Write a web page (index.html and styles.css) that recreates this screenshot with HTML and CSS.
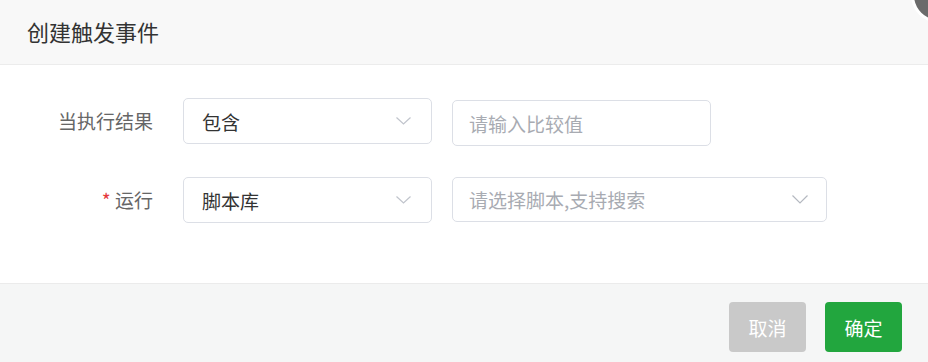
FILE: index.html
```html
<!DOCTYPE html>
<html lang="zh-CN">

<head>
    <meta charset="UTF-8">
    <title>创建触发事件</title>
    <link rel="stylesheet" href="styles.css">
</head>

<body>
    <div class="dialog">
        <div class="dialog-header">创建触发事件</div>
        <span class="dialog-close"></span>

        <div class="dialog-body">
            <div class="form-row">
                <label class="form-label">当执行结果</label>
                <div class="select select-short">
                    <span class="select-value">包含</span>
                    <svg class="chevron" width="15" height="8" viewBox="0 0 15 8"><path d="M0.5 0.5 L7.5 7 L14.5 0.5" fill="none" stroke="#c0c4cc" stroke-width="1.2"/></svg>
                </div>
                <div class="text-input">
                    <span class="placeholder">请输入比较值</span>
                </div>
            </div>

            <div class="form-row">
                <label class="form-label"><span class="required">*</span> 运行</label>
                <div class="select select-short">
                    <span class="select-value">脚本库</span>
                    <svg class="chevron" width="15" height="8" viewBox="0 0 15 8"><path d="M0.5 0.5 L7.5 7 L14.5 0.5" fill="none" stroke="#c0c4cc" stroke-width="1.2"/></svg>
                </div>
                <div class="select select-long">
                    <span class="placeholder">请选择脚本,支持搜索</span>
                    <svg class="chevron" width="16" height="9" viewBox="0 0 16 9"><path d="M0.5 0.5 L8 8 L15.5 0.5" fill="none" stroke="#b4b8c0" stroke-width="1.2"/></svg>
                </div>
            </div>
        </div>

        <div class="dialog-footer">
            <button class="btn btn-cancel">取消</button>
            <button class="btn btn-confirm">确定</button>
        </div>
    </div>
</body>

</html>
```

FILE: styles.css
```css
body {
    margin: 0;
    padding: 0;
    font-family: "Noto Sans CJK SC", "Noto Sans", sans-serif;
    background-color: white;
}

.dialog {
    position: relative;
    width: 928px;
    height: 362px;
    overflow: hidden;
    background-color: white;
}

.dialog-header {
    height: 64px;
    line-height: 62px;
    padding-left: 27px;
    font-size: 22px;
    color: #333;
    background-color: #f8f8f8;
    border-bottom: 1px solid #ececec;
}

.dialog-close {
    position: absolute;
    top: -33px;
    right: -39px;
    width: 50px;
    height: 50px;
    border-radius: 50%;
    background-color: #6b6b6b;
    border: 3px solid white;
}

.dialog-body {
    height: 218px;
    padding-top: 33px;
    box-sizing: border-box;
}

.form-row {
    display: flex;
    align-items: flex-start;
    margin-bottom: 31px;
}

.form-label {
    width: 153px;
    height: 46px;
    line-height: 46px;
    text-align: right;
    font-size: 19px;
    color: #666;
    margin-right: 30px;
}

.required {
    color: #e5383b;
    font-size: 19px;
}

.select,
.text-input {
    display: flex;
    align-items: center;
    box-sizing: border-box;
    height: 46px;
    border: 1px solid #dcdfe6;
    border-radius: 5px;
    background-color: white;
    font-size: 19px;
}

.select-short {
    width: 249px;
    padding: 0 20px 0 18px;
    margin-right: 20px;
}

.select-long {
    width: 375px;
    padding: 0 18px 0 16px;
    height: 45px;
}

.text-input {
    width: 259px;
    padding-left: 16px;
    margin-top: 2px;
}

.select-value {
    flex: 1;
    color: #333;
}

.placeholder {
    flex: 1;
    color: #a8abb2;
}

.chevron {
    flex-shrink: 0;
}

.dialog-footer {
    display: flex;
    justify-content: flex-end;
    gap: 19px;
    height: 79px;
    padding: 18px 26px 0 0;
    box-sizing: border-box;
    background-color: #f5f6f6;
    border-top: 1px solid #ebebeb;
}

.btn {
    width: 77px;
    height: 50px;
    border: none;
    border-radius: 4px;
    color: white;
    font-family: "Noto Sans CJK SC", sans-serif;
    font-size: 19px;
    cursor: pointer;
}

.btn-cancel {
    background-color: #c9c9c9;
}

.btn-confirm {
    background-color: #22a63e;
}
```
